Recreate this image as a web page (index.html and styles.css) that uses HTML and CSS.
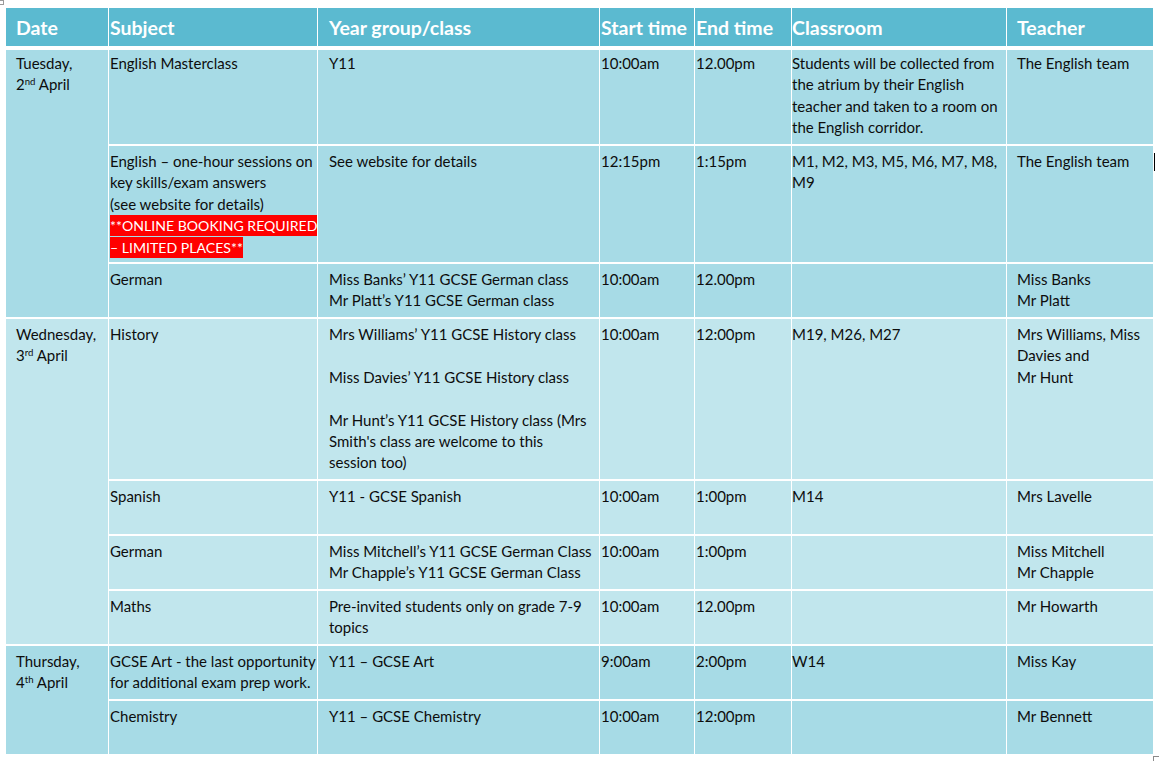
FILE: index.html
```html
<!DOCTYPE html>
<html lang="en">
<head>
<meta charset="utf-8">
<title>Year 11 Easter revision sessions</title>
<link rel="stylesheet" href="styles.css">
</head>
<body>
<span class="move-handle"></span>
<table class="schedule">
  <colgroup>
    <col class="c-date"><col class="c-subject"><col class="c-year"><col class="c-start"><col class="c-end"><col class="c-room"><col class="c-teacher">
  </colgroup>
  <thead>
    <tr class="head">
      <th class="p-date">Date</th>
      <th class="p-subject">Subject</th>
      <th class="p-year">Year group/class</th>
      <th class="p-start">Start time</th>
      <th class="p-end">End time</th>
      <th class="p-room">Classroom</th>
      <th class="p-teacher last">Teacher</th>
    </tr>
  </thead>
  <tbody class="band-a">
    <tr class="h96 first">
      <td class="p-date" rowspan="3">Tuesday,<br>2<sup>nd</sup> April</td>
      <td class="p-subject">English Masterclass</td>
      <td class="p-year">Y11</td>
      <td class="p-start">10:00am</td>
      <td class="p-end">12.00pm</td>
      <td class="p-room">Students will be collected from<br>the atrium by their English<br>teacher and taken to a room on<br>the English corridor.</td>
      <td class="p-teacher last">The English team</td>
    </tr>
    <tr class="h118">
      <td class="p-subject">English – one-hour sessions on<br>key skills/exam answers<br>(see website for details)<br><span class="alert">**ONLINE BOOKING REQUIRED<br>– LIMITED PLACES**</span></td>
      <td class="p-year">See website for details</td>
      <td class="p-start">12:15pm</td>
      <td class="p-end">1:15pm</td>
      <td class="p-room">M1, M2, M3, M5, M6, M7, M8,<br>M9</td>
      <td class="p-teacher last">The English team<span class="cursor"></span></td>
    </tr>
    <tr class="h55">
      <td class="p-subject">German</td>
      <td class="p-year">Miss Banks’ Y11 GCSE German class<br>Mr Platt’s Y11 GCSE German class</td>
      <td class="p-start">10:00am</td>
      <td class="p-end">12.00pm</td>
      <td class="p-room"></td>
      <td class="p-teacher last">Miss Banks<br>Mr Platt</td>
    </tr>
  </tbody>
  <tbody class="band-b">
    <tr class="h162">
      <td class="p-date" rowspan="4">Wednesday,<br>3<sup>rd</sup> April</td>
      <td class="p-subject">History</td>
      <td class="p-year">Mrs Williams’ Y11 GCSE History class<br><br>Miss Davies’ Y11 GCSE History class<br><br>Mr Hunt’s Y11 GCSE History class (Mrs<br>Smith's class are welcome to this<br>session too)</td>
      <td class="p-start">10:00am</td>
      <td class="p-end">12:00pm</td>
      <td class="p-room">M19, M26, M27</td>
      <td class="p-teacher last">Mrs Williams, Miss<br>Davies and<br>Mr Hunt</td>
    </tr>
    <tr class="h55">
      <td class="p-subject">Spanish</td>
      <td class="p-year">Y11 - GCSE Spanish</td>
      <td class="p-start">10:00am</td>
      <td class="p-end">1:00pm</td>
      <td class="p-room">M14</td>
      <td class="p-teacher last">Mrs Lavelle</td>
    </tr>
    <tr class="h55">
      <td class="p-subject">German</td>
      <td class="p-year">Miss Mitchell’s Y11 GCSE German Class<br>Mr Chapple’s Y11 GCSE German Class</td>
      <td class="p-start">10:00am</td>
      <td class="p-end">1:00pm</td>
      <td class="p-room"></td>
      <td class="p-teacher last">Miss Mitchell<br>Mr Chapple</td>
    </tr>
    <tr class="h55">
      <td class="p-subject">Maths</td>
      <td class="p-year">Pre-invited students only on grade 7-9<br>topics</td>
      <td class="p-start">10:00am</td>
      <td class="p-end">12.00pm</td>
      <td class="p-room"></td>
      <td class="p-teacher last">Mr Howarth</td>
    </tr>
  </tbody>
  <tbody class="band-a">
    <tr class="h55">
      <td class="p-date" rowspan="2">Thursday,<br>4<sup>th</sup> April</td>
      <td class="p-subject">GCSE Art - the last opportunity<br>for additional exam prep work.</td>
      <td class="p-year">Y11 – GCSE Art</td>
      <td class="p-start">9:00am</td>
      <td class="p-end">2:00pm</td>
      <td class="p-room">W14</td>
      <td class="p-teacher last">Miss Kay</td>
    </tr>
    <tr class="h55">
      <td class="p-subject">Chemistry</td>
      <td class="p-year">Y11 – GCSE Chemistry</td>
      <td class="p-start">10:00am</td>
      <td class="p-end">12:00pm</td>
      <td class="p-room"></td>
      <td class="p-teacher last">Mr Bennett</td>
    </tr>
  </tbody>
</table>
<span class="end-mark"></span>
</body>
</html>
```
FILE: styles.css
```css
html, body {
  margin: 0;
  padding: 0;
  background: #ffffff;
}

body {
  position: relative;
  width: 1159px;
  height: 761px;
  overflow: hidden;
  font-family: Lato, "Liberation Sans", sans-serif;
  color: #0d0d0d;
}

.schedule {
  margin: 8px 0 0 6px;
  border-collapse: separate;
  border-spacing: 0;
  table-layout: fixed;
  width: 1147px;
}

.c-date { width: 103px; }
.c-subject { width: 209px; }
.c-year { width: 282px; }
.c-start { width: 95px; }
.c-end { width: 97px; }
.c-room { width: 215px; }
.c-teacher { width: 146px; }

.schedule th,
.schedule td {
  border-right: 1px solid #ffffff;
  text-align: left;
  white-space: nowrap;
  overflow: visible;
}

.schedule th.last,
.schedule td.last {
  border-right: 0;
}

.schedule th {
  background: #5bbad0;
  color: #ffffff;
  font-weight: 700;
  font-size: 19.5px;
  line-height: 37px;
  height: 37px;
  padding-top: 1px;
  padding-bottom: 0;
  border-bottom: 4px solid #ffffff;
  vertical-align: middle;
}

.head { height: 41px; }

.schedule td {
  font-size: 15px;
  line-height: 21.4px;
  vertical-align: top;
  padding-top: 5px;
  padding-bottom: 0;
  border-bottom: 2px solid #ffffff;
  position: relative;
}

.schedule .first td { padding-top: 3px; }

.band-a td { background: #a7dbe6; }
.band-b td { background: #c1e6ed; }

.h96 { height: 96px; }
.h118 { height: 118px; }
.h162 { height: 162px; }
.h55 { height: 55px; }

.p-date { padding-left: 10px; padding-right: 0; }
.p-subject { padding-left: 1px; padding-right: 0; }
.p-year { padding-left: 11px; padding-right: 0; }
.p-start { padding-left: 1px; padding-right: 0; }
.p-end { padding-left: 1px; padding-right: 0; }
.p-room { padding-left: 0; padding-right: 0; }
.p-teacher { padding-left: 10px; padding-right: 0; }

sup {
  font-size: 0.64em;
  line-height: 0;
  vertical-align: 0.5em;
}

.alert {
  background: #ff0000;
  color: #ffffff;
  font-size: 14.1px;
  padding: 2px 0 2px 0;
  -webkit-box-decoration-break: clone;
  box-decoration-break: clone;
}

.cursor {
  position: absolute;
  left: 147px;
  top: 7px;
  width: 1px;
  height: 18px;
  background: #000000;
}

.move-handle {
  position: absolute;
  left: 0;
  top: 0;
  width: 4px;
  height: 5px;
  border-right: 1px solid #9a9a9a;
  border-bottom: 1px solid #9a9a9a;
  border-top: 1px solid #9a9a9a;
  box-sizing: border-box;
}

.end-mark {
  position: absolute;
  left: 1153px;
  top: 756px;
  width: 6px;
  height: 5px;
  border-left: 1px solid #8a8a8a;
  border-top: 1px solid #8a8a8a;
  box-sizing: border-box;
}
```
